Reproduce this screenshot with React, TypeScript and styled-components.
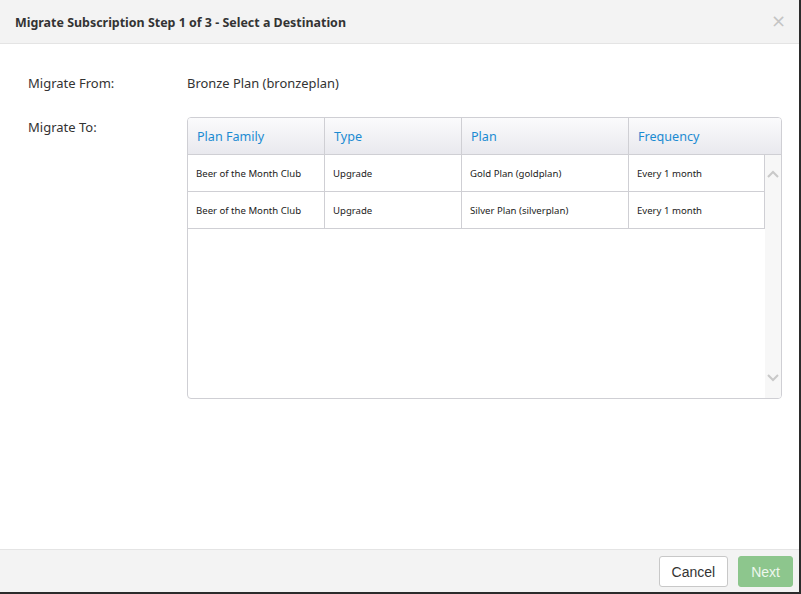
import React from "react";
import styled, { createGlobalStyle } from "styled-components";

const Global = createGlobalStyle`
  html, body { margin: 0; padding: 0; background: #fff; }
  body { font-family: "Noto Sans", "Open Sans", sans-serif; color: #333; }
  * { box-sizing: border-box; }
`;

const Modal = styled.div`
  width: 801px;
  height: 594px;
  border-right: 2px solid #2b2b2b;
  border-bottom: 2px solid #2b2b2b;
  display: flex;
  flex-direction: column;
  background: #fff;
`;

const Header = styled.div`
  height: 44px;
  flex: none;
  background: #f3f3f3;
  border-bottom: 1px solid #e4e4e4;
  display: flex;
  align-items: center;
  justify-content: space-between;
  padding: 1px 13px 0 15px;
`;

const Title = styled.h4`
  margin: 0;
  font-size: 12.45px;
  font-weight: 700;
  color: #333;
`;

const Close = styled.span`
  color: #c4c4c4;
  font-size: 18px;
  line-height: 1;
  font-family: "DejaVu Sans", sans-serif;
  margin-top: -2px;
`;

const Body = styled.div`
  flex: 1;
  padding: 26px 17px 0 28px;
  display: grid;
  grid-template-columns: 159px 1fr;
  grid-auto-rows: min-content;
  row-gap: 21px;
  font-size: 13px;
`;

const Label = styled.div<{ $compact?: boolean }>`
  line-height: ${(p) => (p.$compact ? "20px" : "26px")};
  color: #333;
`;

const Value = styled.div`
  line-height: 26px;
  font-size: 12.9px;
`;

const Table = styled.div`
  height: 282px;
  border: 1px solid #cfcfd4;
  border-radius: 4px;
  overflow: hidden;
  display: flex;
  flex-direction: column;
`;

const HeadRow = styled.div`
  height: 37px;
  flex: none;
  display: grid;
  grid-template-columns: 137px 137px 167px 1fr;
  background: linear-gradient(#fbfbfc, #e9e9ee);
  border-bottom: 1px solid #cfcfd4;
`;

const HeadCell = styled.div`
  display: flex;
  align-items: center;
  padding-left: 9px;
  color: #1b8bd2;
  font-size: 12.6px;
  border-right: 1px solid #cfcfd4;
  &:last-child { border-right: none; }
`;

const BodyArea = styled.div`
  flex: 1;
  display: flex;
`;

const Rows = styled.div`
  flex: 1;
`;

const Row = styled.div`
  height: 37px;
  display: grid;
  grid-template-columns: 137px 137px 167px 1fr;
  border-bottom: 1px solid #cfcfd4;
`;

const Cell = styled.div`
  display: flex;
  align-items: center;
  padding-left: 8px;
  font-size: 9.6px;
  color: #222;
  border-right: 1px solid #cfcfd4;
`;

const Scrollbar = styled.div`
  width: 16px;
  background: #f7f7f7;
  display: flex;
  flex-direction: column;
  justify-content: space-between;
  align-items: center;
  padding: 15px 0 16px;
`;

const Footer = styled.div`
  height: 43px;
  flex: none;
  background: #f3f3f3;
  border-top: 1px solid #e4e4e4;
  display: flex;
  align-items: center;
  justify-content: flex-end;
  gap: 10px;
  padding: 0 6px 0 0;
`;

const Button = styled.button<{ $primary?: boolean }>`
  height: 31px;
  padding: 0 12px;
  font-family: "Liberation Sans", Arial, sans-serif;
  font-size: 14px;
  border-radius: 3px;
  border: 1px solid ${(p) => (p.$primary ? "#8cc68c" : "#c8c8c8")};
  background: ${(p) => (p.$primary ? "#8dc68d" : "#fff")};
  color: ${(p) => (p.$primary ? "#eef7ee" : "#333")};
  margin-top: 1px;
`;

const Chevron = ({ up }: { up?: boolean }) => (
  <svg width="12" height="8" viewBox="0 0 12 8">
    <path
      d={up ? "M1 7 L6 2 L11 7" : "M1 1 L6 6 L11 1"}
      fill="none"
      stroke="#c9c9c9"
      strokeWidth="2"
    />
  </svg>
);

const rows = [
  ["Beer of the Month Club", "Upgrade", "Gold Plan (goldplan)", "Every 1 month"],
  ["Beer of the Month Club", "Upgrade", "Silver Plan (silverplan)", "Every 1 month"],
];

export default function App() {
  return (
    <>
      <Global />
      <Modal>
        <Header>
          <Title>Migrate Subscription Step 1 of 3 - Select a Destination</Title>
          <Close>×</Close>
        </Header>
        <Body>
          <Label>Migrate From:</Label>
          <Value>Bronze Plan (bronzeplan)</Value>
          <Label $compact>Migrate To:</Label>
          <Table>
            <HeadRow>
              <HeadCell>Plan Family</HeadCell>
              <HeadCell>Type</HeadCell>
              <HeadCell>Plan</HeadCell>
              <HeadCell>Frequency</HeadCell>
            </HeadRow>
            <BodyArea>
              <Rows>
                {rows.map((r, i) => (
                  <Row key={i}>
                    {r.map((c, j) => (
                      <Cell key={j}>{c}</Cell>
                    ))}
                  </Row>
                ))}
              </Rows>
              <Scrollbar>
                <Chevron up />
                <Chevron />
              </Scrollbar>
            </BodyArea>
          </Table>
        </Body>
        <Footer>
          <Button>Cancel</Button>
          <Button $primary>Next</Button>
        </Footer>
      </Modal>
    </>
  );
}
